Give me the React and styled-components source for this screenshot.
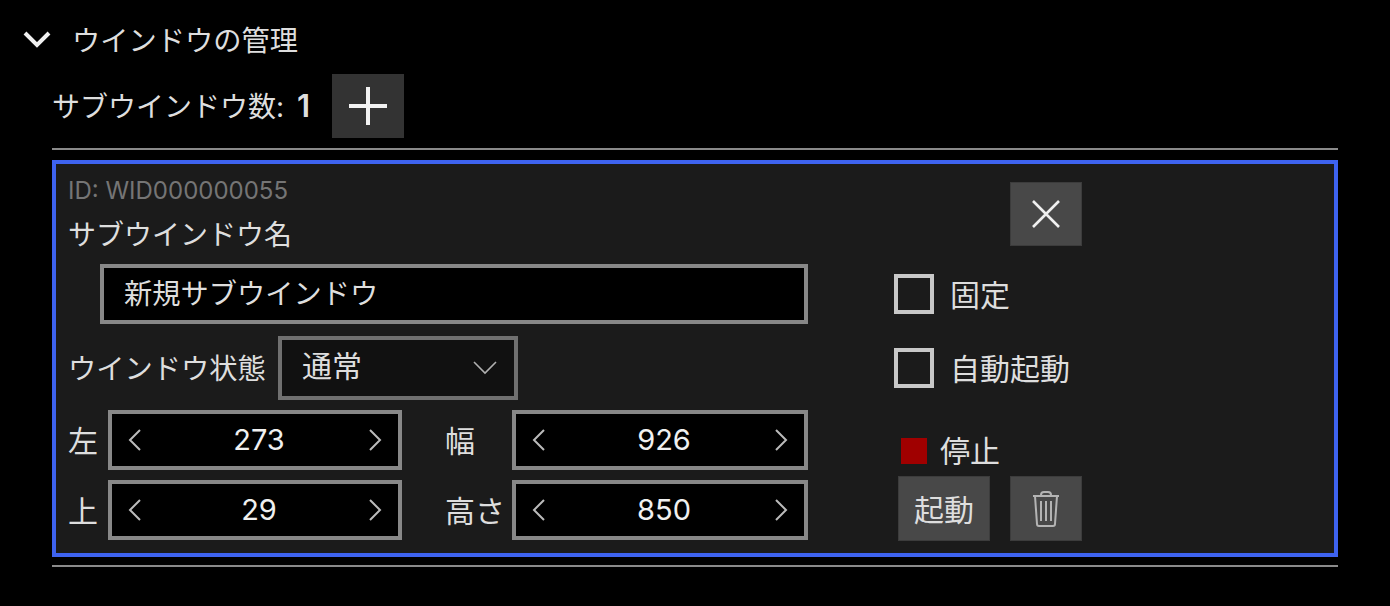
import styled, { createGlobalStyle } from "styled-components";

const GlobalStyle = createGlobalStyle`
  html, body {
    margin: 0;
    padding: 0;
    background: #000;
  }
  body {
    font-family: Inter, "Noto Sans CJK JP", sans-serif;
    color: #dedede;
  }
`;

const Page = styled.div`
  width: 1390px;
  height: 606px;
  overflow: hidden;
  box-sizing: border-box;
  background: #000;
`;

const Header = styled.div`
  display: flex;
  align-items: center;
  height: 40px;
  padding: 20px 0 0 22px;
  font-size: 28.25px;
  line-height: 42px;
  svg {
    width: 30px;
    height: 30px;
    margin-right: 20px;
  }
  span {
    padding-top: 2px;
  }
`;

const Body = styled.div`
  width: 1286px;
  margin-left: 52px;
`;

const CountRow = styled.div`
  display: flex;
  align-items: center;
  height: 64px;
  margin-top: 14px;
  font-size: 28px;
`;

const CountLabel = styled.span`
  padding-bottom: 2px;
`;

const Count = styled.span`
  width: 48px;
  padding: 0 0 2px 13px;
  box-sizing: border-box;
  font-size: 31px;
  font-weight: 600;
`;

const SquareButton = styled.button`
  display: flex;
  align-items: center;
  justify-content: center;
  width: ${(p) => p.$w || 72}px;
  height: ${(p) => p.$h || 64}px;
  padding: 0 0 ${(p) => p.$lift || 0}px;
  border: 1px solid ${(p) => (p.$dark ? "#333" : "#3c3c3c")};
  background: ${(p) => (p.$dark ? "#333" : "#484848")};
  color: #dedede;
  font: inherit;
  font-size: 30px;
  box-sizing: border-box;
`;

const Rule = styled.hr`
  height: 2px;
  margin: ${(p) => p.$top}px 0 ${(p) => p.$bottom}px;
  border: 0;
  background: #8a8a8a;
`;

const Card = styled.div`
  display: flex;
  height: 397px;
  box-sizing: border-box;
  border: 4px solid #3e63f0;
  background: #1b1b1b;
  padding: 14px 12px 0;
`;

const LeftColumn = styled.div`
  width: 740px;
`;

const IdText = styled.div`
  height: 32px;
  margin-top: -3px;
  font-size: 24px;
  line-height: 32px;
  color: #757575;
`;

const FieldTitle = styled.div`
  height: 40px;
  margin-top: 8px;
  font-size: 28px;
  line-height: 40px;
`;

const NameInput = styled.div`
  display: flex;
  align-items: center;
  width: 708px;
  height: 60px;
  margin: 9px 0 12px 32px;
  padding: 0 20px 6px;
  box-sizing: border-box;
  border: 4px solid #888;
  background: #000;
  font-size: 28.25px;
`;

const StateRow = styled.div`
  display: flex;
  align-items: center;
  gap: 12px;
`;

const StateLabel = styled.span`
  width: 198px;
  padding-bottom: 4px;
  font-size: 28.25px;
  white-space: nowrap;
`;

const StateSelect = styled.div`
  display: flex;
  align-items: center;
  justify-content: space-between;
  width: 240px;
  height: 64px;
  padding: 0 16px 8px 20px;
  box-sizing: border-box;
  border: 4px solid #707070;
  background: #111;
  font-size: 30px;
  svg {
    width: 26px;
    height: 26px;
    margin-top: 8px;
  }
`;

const StepperGrid = styled.div`
  display: grid;
  grid-template-columns: 40px 294px 110px 296px;
  grid-auto-rows: 60px;
  row-gap: 10px;
  margin-top: 10px;
  align-items: center;
`;

const AxisLabel = styled.span`
  padding-left: ${(p) => p.$pad || 0}px;
  font-size: 30px;
  margin-bottom: 3px;
`;

const Stepper = styled.div`
  display: flex;
  align-items: center;
  justify-content: space-between;
  height: 60px;
  padding: 0 8px;
  box-sizing: border-box;
  border: 4px solid #888;
  background: #000;
  color: #f0f0f0;
  font-size: 29px;
  span {
    padding: 0 0 2px 8px;
  }
  svg {
    width: 32px;
    height: 32px;
    color: #bbb;
  }
`;

const RightColumn = styled.div`
  margin-left: 86px;
`;

const CloseSlot = styled.div`
  margin: 4px 0 28px 116px;
`;

const CheckRow = styled.div`
  display: flex;
  align-items: center;
  height: 40px;
  margin-bottom: 34px;
  font-size: 30px;
  span:last-child {
    padding-bottom: 2px;
  }
`;

const CheckBox = styled.i`
  width: 40px;
  height: 40px;
  box-sizing: border-box;
  border: 4px solid #c8c8c8;
  margin-right: 16px;
`;

const StatusRow = styled.div`
  display: flex;
  align-items: center;
  height: 26px;
  margin: 50px 0 12px 7px;
  font-size: 30px;
  span:last-child {
    padding-bottom: 4px;
  }
`;

const StatusDot = styled.i`
  width: 26px;
  height: 26px;
  margin-right: 13px;
  background: #a00000;
`;

const ActionRow = styled.div`
  display: flex;
  gap: 20px;
  margin-left: 4px;
`;

const Chevron = ({ d, ...rest }) => (
  <svg viewBox="0 0 32 32" fill="none" stroke="currentColor" strokeWidth="2" {...rest}>
    <path d={d} />
  </svg>
);

const Field = ({ value }) => (
  <Stepper>
    <Chevron d="M20 6 L10 16 L20 26" />
    <span>{value}</span>
    <Chevron d="M12 6 L22 16 L12 26" />
  </Stepper>
);

export default function App() {
  return (
    <Page>
      <GlobalStyle />
      <Header>
        <svg viewBox="0 0 30 30" fill="none" stroke="#f0f0f0" strokeWidth="4">
          <path d="M3 8 L15 20 L27 8" />
        </svg>
        <span>ウインドウの管理</span>
      </Header>
      <Body>
        <CountRow>
          <CountLabel>サブウインドウ数:</CountLabel>
          <Count>1</Count>
          <SquareButton $dark>
            <svg width="40" height="40" viewBox="0 0 40 40" stroke="#f2f2f2" strokeWidth="4">
              <path d="M20 1 V39 M1 20 H39" />
            </svg>
          </SquareButton>
        </CountRow>
        <Rule $top={10} $bottom={10} />
        <Card>
          <LeftColumn>
            <IdText>ID: WID000000055</IdText>
            <FieldTitle>サブウインドウ名</FieldTitle>
            <NameInput>新規サブウインドウ</NameInput>
            <StateRow>
              <StateLabel>ウインドウ状態</StateLabel>
              <StateSelect>
                通常
                <svg viewBox="0 0 26 26" fill="none" stroke="#b0b0b0" strokeWidth="1.6">
                  <path d="M2 7 L13 18 L24 7" />
                </svg>
              </StateSelect>
            </StateRow>
            <StepperGrid>
              <AxisLabel>左</AxisLabel>
              <Field value="273" />
              <AxisLabel $pad={43}>幅</AxisLabel>
              <Field value="926" />
              <AxisLabel>上</AxisLabel>
              <Field value="29" />
              <AxisLabel $pad={43}>高さ</AxisLabel>
              <Field value="850" />
            </StepperGrid>
          </LeftColumn>
          <RightColumn>
            <CloseSlot>
              <SquareButton>
                <svg width="30" height="30" viewBox="0 0 30 30" stroke="#f0f0f0" strokeWidth="2.6">
                  <path d="M2 2 L28 28 M28 2 L2 28" />
                </svg>
              </SquareButton>
            </CloseSlot>
            <CheckRow>
              <CheckBox />
              <span>固定</span>
            </CheckRow>
            <CheckRow>
              <CheckBox />
              <span>自動起動</span>
            </CheckRow>
            <StatusRow>
              <StatusDot />
              <span>停止</span>
            </StatusRow>
            <ActionRow>
              <SquareButton $w={92} $h={65} $lift={2}>起動</SquareButton>
              <SquareButton $h={65}>
                <svg width="30" height="38" viewBox="0 0 30 38" fill="none" stroke="#b4b4b4" strokeWidth="2">
                  <path d="M2 6 H28 M10 5 Q10 2 13 2 H17 Q20 2 20 5 M4 6 L6 34 Q6 36 8 36 H22 Q24 36 24 34 L26 6 M10 11 V31 M15 11 V31 M20 11 V31" />
                </svg>
              </SquareButton>
            </ActionRow>
          </RightColumn>
        </Card>
        <Rule $top={8} $bottom={0} />
      </Body>
    </Page>
  );
}
